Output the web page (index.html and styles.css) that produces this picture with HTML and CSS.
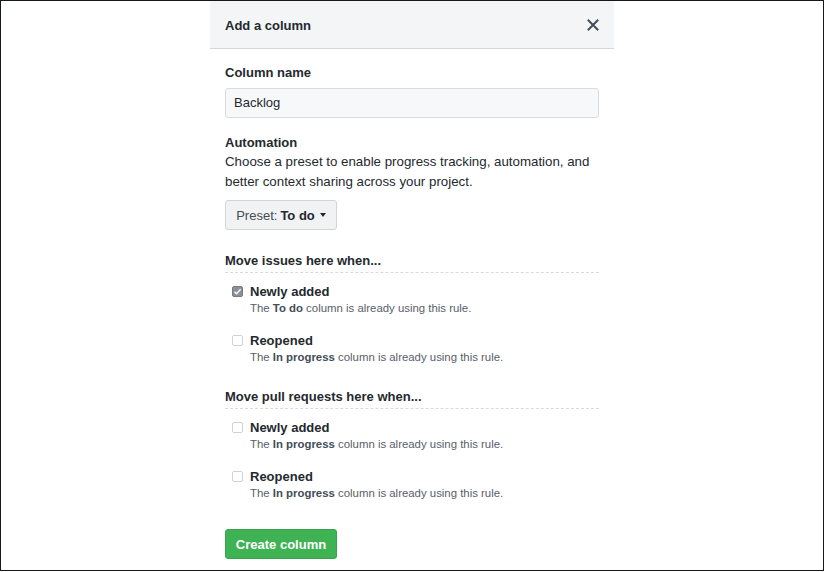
FILE: index.html
```html
<!DOCTYPE html>
<html>
<head>
<meta charset="utf-8">
<link rel="stylesheet" href="styles.css">
</head>
<body>
<div class="frame">
  <div class="dialog">
    <div class="dialog-header">
      <span class="dialog-title">Add a column</span>
      <svg class="close" width="12" height="12" viewBox="0 0 12 12"><path d="M1.5 1.5 L10.5 10.5 M10.5 1.5 L1.5 10.5" stroke="#444d56" stroke-width="2" stroke-linecap="square"/></svg>
    </div>
    <div class="dialog-body">
      <label class="label">Column name</label>
      <div class="input">Backlog</div>
      <div class="label label-auto">Automation</div>
      <p class="desc">Choose a preset to enable progress tracking, automation, and better context sharing across your project.</p>
      <div class="btn-preset">Preset: <b>To do</b> <span class="caret"></span></div>

      <div class="section-title section-issues">Move issues here when...</div>
      <div class="rule">
        <span class="cb checked"><svg width="9" height="9" viewBox="0 0 9 9"><path d="M1.5 4.7 L3.6 6.8 L7.6 2.2" stroke="#fff" stroke-width="1.4" fill="none"/></svg></span>
        <div class="rule-text">
          <div class="rule-name">Newly added</div>
          <div class="note">The <b>To do</b> column is already using this rule.</div>
        </div>
      </div>
      <div class="rule">
        <span class="cb"></span>
        <div class="rule-text">
          <div class="rule-name">Reopened</div>
          <div class="note">The <b>In progress</b> column is already using this rule.</div>
        </div>
      </div>

      <div class="section-title section-pr">Move pull requests here when...</div>
      <div class="rule">
        <span class="cb"></span>
        <div class="rule-text">
          <div class="rule-name">Newly added</div>
          <div class="note">The <b>In progress</b> column is already using this rule.</div>
        </div>
      </div>
      <div class="rule">
        <span class="cb"></span>
        <div class="rule-text">
          <div class="rule-name">Reopened</div>
          <div class="note">The <b>In progress</b> column is already using this rule.</div>
        </div>
      </div>

      <div class="btn-create">Create column</div>
    </div>
  </div>
</div>
</body>
</html>
```

FILE: styles.css
```css
* { box-sizing: border-box; }
html, body { margin: 0; padding: 0; background: #fff; }
body { font-family: "Liberation Sans", Arial, sans-serif; color: #24292e; font-size: 13px; }
.frame {
  width: 824px;
  height: 571px;
  border: 1px solid #15191d;
  display: flex;
  justify-content: center;
  overflow: hidden;
}
.dialog { width: 404px; margin-top: -1px; }
.dialog-header {
  height: 49px;
  background: #f4f5f6;
  border-bottom: 1px solid #d4d6d8;
  display: flex;
  align-items: center;
  justify-content: space-between;
  padding: 2px 15px 0 15px;
}
.dialog-title { font-weight: 700; font-size: 13px; color: #24292e; }
.close { display: block; margin-top: 0; }
.dialog-body { padding: 14px 15px 0 15px; }
.label { display: block; font-weight: 700; line-height: 20px; margin-bottom: 5px; }
.input {
  height: 30px;
  border: 1px solid #d9dcdf;
  border-radius: 3px;
  background: #f7f8f9;
  padding: 0 8px;
  line-height: 28px;
  color: #24292e;
}
.label-auto { margin-top: 15px; margin-bottom: 0; line-height: 19px; }
.desc { margin: 0; line-height: 20px; color: #24292e; font-size: 13.3px; }
.btn-preset {
  display: flex;
  align-items: center;
  margin-top: 8px;
  height: 30px;
  width: 112px;
  justify-content: center;
  border: 1px solid #d1d5da;
  border-radius: 3px;
  background: #f0f2f4;
  color: #444d56;
  gap: 4px;
}
.btn-preset b { color: #24292e; margin-left: -1px; }
.caret {
  width: 0; height: 0;
  border-left: 3.5px solid transparent;
  border-right: 3.5px solid transparent;
  border-top: 4px solid #24292e;
  margin-left: 1px;
}
.section-title {
  font-weight: 700;
  line-height: 20px;
  padding-bottom: 1px;
  border-bottom: 1px dashed #d8dbde;
  margin-bottom: 9px;
}
.section-issues { margin-top: 21px; }
.section-pr { margin-top: 22px; }
.rule { display: flex; align-items: flex-start; margin-bottom: 15px; }
.cb {
  flex: none;
  width: 11px;
  height: 11px;
  margin: 4px 0 0 7px;
  border: 1px solid #cfd3d7;
  border-radius: 2px;
  background: #fff;
  display: flex;
  align-items: center;
  justify-content: center;
}
.cb.checked { background: #8b9096; border-color: #777c82; }
.cb svg { display: block; }
.rule-text { margin-left: 7px; }
.rule-name { font-weight: 700; line-height: 19px; color: #24292e; }
.note { font-size: 11.4px; line-height: 15px; color: #586069; }
.note b { color: #444d56; }
.btn-create {
  margin-top: 28px;
  width: 112px;
  height: 30px;
  border-radius: 3px;
  background: #3fb353;
  border: 1px solid #37a34b;
  color: #fff;
  font-weight: 700;
  display: flex;
  align-items: center;
  justify-content: center;
}
```
